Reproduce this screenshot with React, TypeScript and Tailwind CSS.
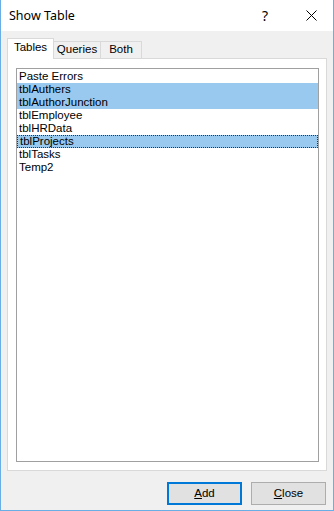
import React from "react";

const items = [
  { name: "Paste Errors", sel: false, focus: false },
  { name: "tblAuthers", sel: true, focus: false },
  { name: "tblAuthorJunction", sel: true, focus: false },
  { name: "tblEmployee", sel: false, focus: false },
  { name: "tblHRData", sel: false, focus: false },
  { name: "tblProjects", sel: true, focus: true },
  { name: "tblTasks", sel: false, focus: false },
  { name: "Temp2", sel: false, focus: false },
];

export default function App() {
  return (
    <div
      className="w-[334px] h-[511px] flex flex-col bg-[#f0f0f0] border-l border-r border-b border-[#6aaee6] text-black overflow-hidden"
      style={{ fontFamily: '"Liberation Sans", Arial, sans-serif' }}
    >
      {/* Title bar */}
      <div className="h-[31px] shrink-0 bg-white flex items-center pl-[8px]">
        <span className="text-[12.5px] leading-none pt-[1px]" style={{ fontFamily: '"Noto Sans", sans-serif' }}>
          Show Table
        </span>
        <div className="flex-1" />
        <span className="text-[14px] leading-none mr-[38px]" style={{ fontFamily: '"Noto Sans", sans-serif' }}>?</span>
        <svg width="11" height="11" viewBox="0 0 11 11" className="mr-[16px]">
          <path d="M0.5 0.5 L10.5 10.5 M10.5 0.5 L0.5 10.5" stroke="#000" strokeWidth="1" />
        </svg>
      </div>

      {/* Body */}
      <div className="flex-1 flex flex-col px-[6px] pt-[7px] pb-[5px]">
        {/* Tabs */}
        <div className="h-[20px] shrink-0 flex items-end text-[11.5px]">
          <div className="relative z-10 w-[47px] h-[21px] -mb-px bg-white border border-b-0 border-[#d9d9d9] flex items-center justify-center pb-[2px]">
            Tables
          </div>
          <div className="-ml-px w-[48px] h-[17px] bg-[#f0f0f0] border border-b-0 border-[#d9d9d9] flex items-center justify-center">
            Queries
          </div>
          <div className="-ml-px w-[42px] h-[17px] bg-[#f0f0f0] border border-b-0 border-[#d9d9d9] flex items-center justify-center">
            Both
          </div>
        </div>

        {/* Panel */}
        <div className="h-[413px] shrink-0 bg-white border border-[#d9d9d9] pl-[8px] pr-[7px] pt-[9px] pb-[8px] flex">
          <div className="flex-1 border border-[#a0a0a0] bg-white pt-px text-[11.5px]">
            {items.map((it) => (
              <div
                key={it.name}
                className={
                  "h-[13px] flex items-center pl-[2px] leading-none " +
                  (it.sel ? "bg-[#99c9ef] " : "") +
                  (it.focus ? "border border-dotted border-[#333] pl-[1px]" : "")
                }
              >
                {it.name}
              </div>
            ))}
          </div>
        </div>

        <div className="flex-1" />

        {/* Buttons */}
        <div className="flex justify-end gap-[9px] pr-px text-[11.5px]">
          <div className="w-[75px] h-[23px] bg-[#e1e1e1] border-2 border-[#0078d7] flex items-center justify-center">
            <span><span className="underline">A</span>dd</span>
          </div>
          <div className="w-[75px] h-[23px] bg-[#e1e1e1] border border-[#adadad] flex items-center justify-center">
            <span><span className="underline">C</span>lose</span>
          </div>
        </div>
      </div>
    </div>
  );
}
